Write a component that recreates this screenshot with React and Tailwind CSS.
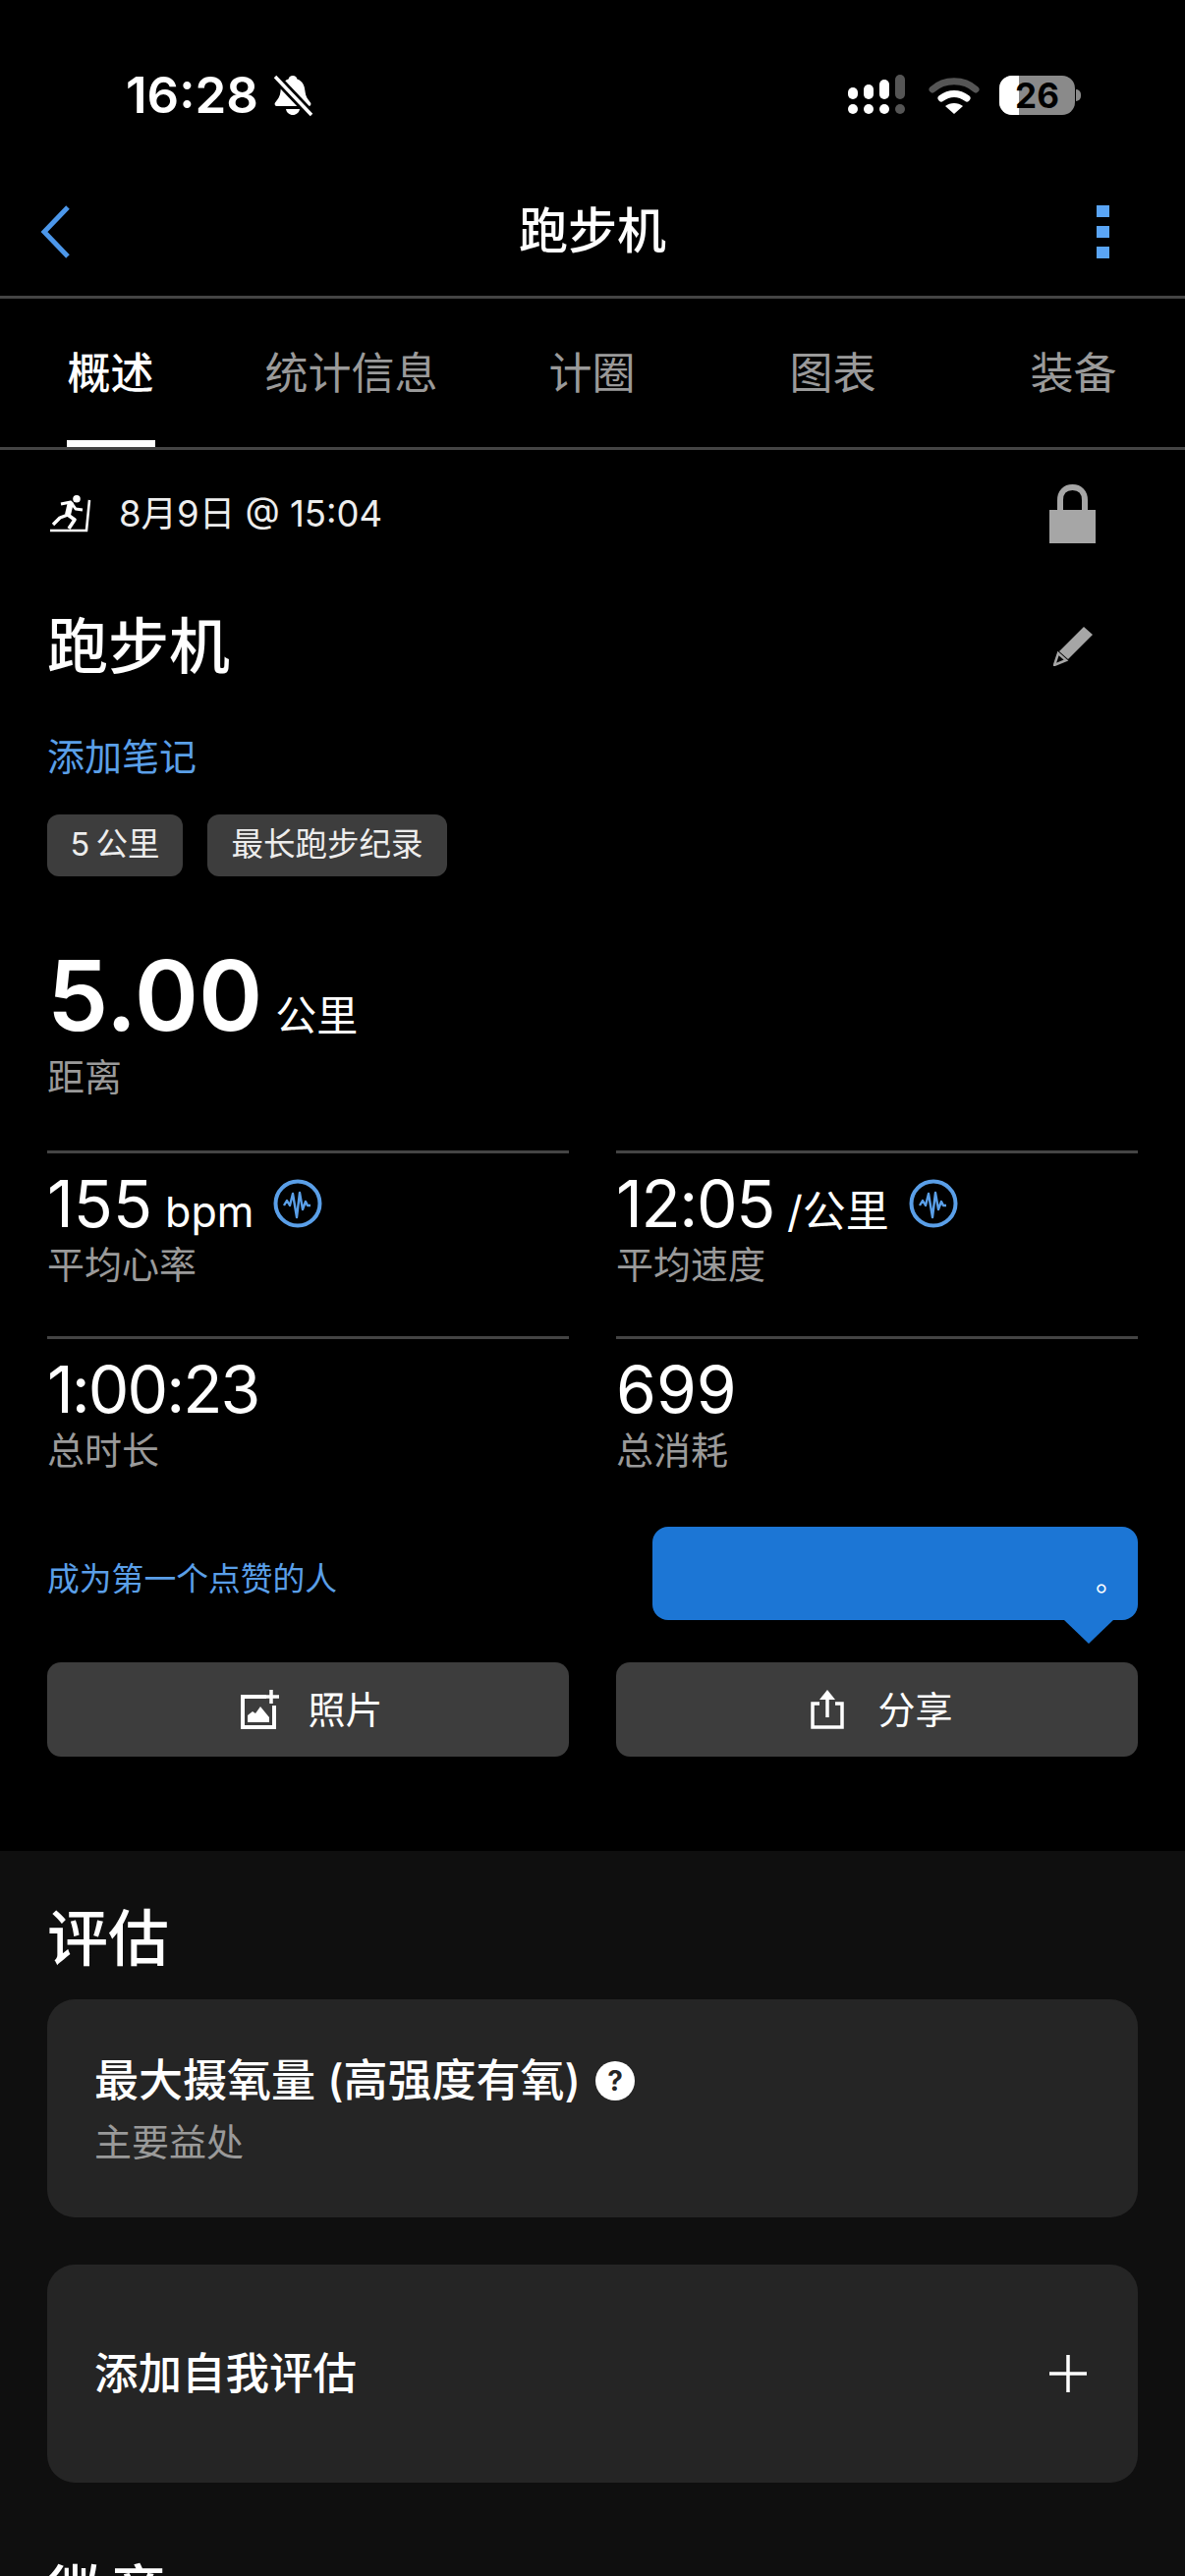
const BLUE = '#5a9fe8';

function BellOff() {
    return (
        <svg width="42" height="44" viewBox="0 0 42 44" fill="none">
            <path d="M21 2c2.500 0 4 1.600 4.400 3.400C31 7.200 33 12 33.500 18c.3 4.500 2.500 8 5.500 11.500 1 1.300.3 3.500-1.800 3.500H4.800C2.700 33 2 30.800 3 29.500 6 26 8.200 22.500 8.500 18 9 12 11 7.200 16.600 5.400 17 3.600 18.500 2 21 2z" fill="#fff" />
            <path d="M14 36h14c-.6 3.600-3.400 6-7 6s-6.400-2.400-7-6z" fill="#fff" />
            <path d="M3 3l37 39" stroke="#000" strokeWidth="9" />
            <path d="M3 3l37 39" stroke="#fff" strokeWidth="3.500" />
        </svg>
    );
}

function SignalIcon() {
    return (
        <svg width="62" height="42" viewBox="0 0 62 42">
            <rect x="0" y="13" width="10" height="12" rx="5" fill="#fff" />
            <rect x="16" y="10" width="10" height="15" rx="5" fill="#fff" />
            <rect x="32" y="5" width="10" height="20" rx="5" fill="#fff" />
            <rect x="48" y="0" width="10" height="25" rx="5" fill="#555" />
            <circle cx="5" cy="35" r="5" fill="#fff" />
            <circle cx="21" cy="35" r="5" fill="#fff" />
            <circle cx="37" cy="35" r="5" fill="#fff" />
            <circle cx="53" cy="35" r="5" fill="#555" />
        </svg>
    );
}

function WifiIcon() {
    return (
        <svg width="52" height="38" viewBox="0 0 52 38" fill="none">
            <path d="M4 13C16 2 36 2 48 13" stroke="#555" strokeWidth="7" strokeLinecap="round" />
            <path d="M13 22c8-6 18-6 26 0" stroke="#fff" strokeWidth="7" strokeLinecap="round" />
            <path d="M17 30c5-4 13-4 18 0l-9 8z" fill="#fff" />
        </svg>
    );
}

function Battery() {
    return (
        <div className="flex items-center">
            <div className="relative w-[77px] h-[40px] rounded-[13px] overflow-hidden bg-[#8a8a8a] flex items-center justify-center">
                <div className="absolute left-0 top-0 bottom-0 w-[20px] bg-white" />
                <span className="relative text-[35px] font-bold text-black leading-none">26</span>
            </div>
            <div className="w-[5px] h-[12px] bg-[#8a8a8a] rounded-r-full ml-[1px]" />
        </div>
    );
}

function TreadmillIcon() {
    return (
        <svg width="42" height="38" viewBox="0 0 42 38" fill="none">
            <circle cx="27" cy="3.800" r="3.800" fill="#fff" />
            <path d="M40 5l-3 31H0" stroke="#fff" strokeWidth="2.600" />
            <path d="M11 9l10-2 5 7 7 1" stroke="#fff" strokeWidth="3" strokeLinejoin="round" />
            <path d="M21 7l-3 13" stroke="#fff" strokeWidth="6" />
            <path d="M18 20l-8 3-7 7" stroke="#fff" strokeWidth="3.400" strokeLinejoin="round" />
            <path d="M18 20l7 5-6 9" stroke="#fff" strokeWidth="3.600" strokeLinejoin="round" />
        </svg>
    );
}

function LockIcon() {
    return (
        <svg width="47" height="60" viewBox="0 0 47 60" fill="none">
            <path d="M11 27V16C11 8 16 3 23.500 3S36 8 36 16v11" stroke="#a6a6a6" strokeWidth="6" />
            <rect x="0" y="26" width="47" height="34" fill="#a6a6a6" />
        </svg>
    );
}

function PencilIcon() {
    return (
        <svg width="40" height="40" viewBox="0 0 40 40" fill="none">
            <path d="M31 0l9 8L15 33 6 25z" fill="#a6a6a6" />
            <path d="M5 27l8 7-12 5z" fill="none" stroke="#a6a6a6" strokeWidth="2.500" />
        </svg>
    );
}

function PulseBadge() {
    return (
        <svg width="50" height="50" viewBox="0 0 50 50" fill="none" className="shrink-0">
            <circle cx="25" cy="25" r="22.500" stroke={BLUE} strokeWidth="4" />
            <path d="M11 27l3-5 3 5 3-12 4 24 3-25 3 17 3-8 2 4h3" stroke={BLUE} strokeWidth="2.400" strokeLinejoin="round" />
        </svg>
    );
}

function PhotoIcon() {
    return (
        <svg width="41" height="40" viewBox="0 0 41 40" fill="none">
            <path d="M26 7H2v31h32V16" stroke="#fff" strokeWidth="4" />
            <path d="M31 0v14M24 7h15" stroke="#fff" strokeWidth="3.500" />
            <path d="M7 33V26l5-4 3 2 5-7 9 11v5z" fill="#fff" />
        </svg>
    );
}

function ShareIcon() {
    return (
        <svg width="34" height="40" viewBox="0 0 34 40" fill="none">
            <path d="M9 14H2v24h30V14h-7" stroke="#fff" strokeWidth="3.500" />
            <path d="M17 4v24" stroke="#fff" strokeWidth="3.500" />
            <path d="M17 0l8 10H9z" fill="#fff" />
        </svg>
    );
}

function HelpIcon() {
    return (
        <div className="w-[40px] h-[40px] rounded-full bg-white flex items-center justify-center text-[#252525] text-[28px] font-bold leading-none shrink-0">
            ?
        </div>
    );
}

function Stat({ value, unit, label, pulse, tight }) {
    return (
        <div className="border-t-[3px] border-[#444444] h-[189px] pt-[17px]">
            <div className="flex items-baseline h-[68px]">
                <span className={`text-[66px] leading-[68px] font-normal ${tight}`}>{value}</span>
                {unit && <span className={unit === 'bpm' ? 'text-[43px] ml-[13px]' : 'text-[44px] ml-[13px]'}>{unit}</span>}
                {pulse && <span className="ml-[20px] self-center"><PulseBadge /></span>}
            </div>
            <div className="text-[38px] leading-[44px] text-[#9a9a9a] mt-[6px]">{label}</div>
        </div>
    );
}

function ActionButton({ icon, label, className }) {
    return (
        <button className={`h-[96px] rounded-[14px] bg-[#3d3d3d] flex items-center justify-center text-[38px] text-white ${className}`}>
            {icon}
            <span>{label}</span>
        </button>
    );
}

const tabs = ['概述', '统计信息', '计圈', '图表', '装备'];

export default function App() {
    return (
        <div
            className="w-[1206px] h-[2622px] overflow-hidden bg-black text-white"
            style={{ fontFamily: '"Inter", "Noto Sans CJK SC", sans-serif' }}
        >
            {/* status bar */}
            <div className="h-[170px] pt-[74px] pl-[128px] pr-[106px] flex items-start justify-between">
                <div className="flex items-center gap-[14px] h-[46px]">
                    <span className="text-[51px] leading-[46px] font-semibold">16:28</span>
                    <BellOff />
                </div>
                <div className="flex items-center gap-[20px] h-[46px]">
                    <SignalIcon />
                    <WifiIcon />
                    <Battery />
                </div>
            </div>

            {/* nav */}
            <div className="h-[134px] border-b-[3px] border-[#444444] pl-[40px] pr-[77px] flex items-center justify-between">
                <div className="w-[50px]">
                    <svg width="32" height="54" viewBox="0 0 32 54" fill="none">
                        <path d="M29 2L5 27l24 25" stroke="#4c97ea" strokeWidth="5" />
                    </svg>
                </div>
                <div className="text-[50px] font-medium">跑步机</div>
                <div className="flex flex-col gap-[9px]">
                    <div className="w-[13px] h-[12px] bg-[#5aa5f5]" />
                    <div className="w-[13px] h-[12px] bg-[#5aa5f5]" />
                    <div className="w-[13px] h-[12px] bg-[#5aa5f5]" />
                </div>
            </div>

            {/* tabs */}
            <div className="h-[154px] border-b-[3px] border-[#444444] overflow-hidden">
                <div className="grid grid-cols-[repeat(5,245px)] h-full -ml-[10px]">
                    {tabs.map((tab, i) => (
                        <div
                            key={tab}
                            className={`relative flex items-center justify-center text-[44px] ${i === 0 ? 'text-white font-medium' : 'text-[#9a9a9a]'}`}
                        >
                            {tab}
                            {i === 0 && <div className="absolute bottom-0 left-[78px] w-[90px] h-[7px] bg-white" />}
                        </div>
                    ))}
                </div>
            </div>

            <div className="px-[48px]">
                <div className="h-[130px] flex items-center justify-between">
                    <div className="flex items-center">
                        <div className="ml-[3px] w-[70px]"><TreadmillIcon /></div>
                        <span className="text-[36.5px] text-[#ededed]">8月9日 @ 15:04</span>
                    </div>
                    <div className="mr-[43px]"><LockIcon /></div>
                </div>

                <div className="h-[140px] flex items-center justify-between">
                    <div className="text-[62px] font-medium">跑步机</div>
                    <div className="mr-[46px]"><PencilIcon /></div>
                </div>

                <div className="h-[84px] flex items-center text-[38px]" style={{ color: BLUE }}>添加笔记</div>

                <div className="flex gap-[25px] mt-[17px]">
                    <div className="h-[63px] w-[138px] rounded-[12px] bg-[#3d3d3d] flex items-center justify-center text-[32.5px] text-[#ededed] [word-spacing:-3px]">5 公里</div>
                    <div className="h-[63px] w-[244px] rounded-[12px] bg-[#3d3d3d] flex items-center justify-center text-[32.5px] text-[#ededed]">最长跑步纪录</div>
                </div>

                <div className="flex items-baseline mt-[65px] h-[112px]">
                    <span className="text-[99px] leading-[112px] font-semibold">5.00</span>
                    <span className="text-[42px] ml-[13px]">公里</span>
                </div>
                <div className="text-[38px] leading-[44px] text-[#9a9a9a] mt-[5px]">距离</div>

                <div className="grid grid-cols-2 gap-x-[48px] mt-[53px]">
                    <Stat value="155" unit="bpm" label="平均心率" pulse tight="" />
                    <Stat value="12:05" unit="/公里" label="平均速度" pulse tight="tracking-[-1.4px]" />
                    <Stat value="1:00:23" label="总时长" tight="tracking-[-2px]" />
                    <Stat value="699" label="总消耗" tight="" />
                </div>

                <div className="relative h-[148px] pb-[20px] flex items-center text-[32.8px] -mt-[5px]" style={{ color: BLUE }}>
                    成为第一个点赞的人
                    <div className="absolute right-0 top-[10px] w-[494px] h-[95px] rounded-[16px] bg-[#1c76d5] flex items-end justify-end pr-[13px] pb-[26px] text-white text-[30px] leading-none">
                        。
                    </div>
                    <svg className="absolute right-[25px] top-[105px]" width="50" height="24" viewBox="0 0 50 24">
                        <path d="M0 0h50L25 24z" fill="#1c76d5" />
                    </svg>
                </div>

                <div className="grid grid-cols-2 gap-x-[48px]">
                    <ActionButton icon={<PhotoIcon />} label="照片" className="gap-[27px] pl-[8px]" />
                    <ActionButton icon={<ShareIcon />} label="分享" className="gap-[34px] pl-[10px]" />
                </div>
            </div>

            {/* summary section */}
            <div className="mt-[96px] bg-[#0f0f0f] px-[48px] pt-[48px] h-[800px]">
                <div className="text-[62px] leading-[84px] font-medium">评估</div>
                <div className="mt-[19px] h-[222px] rounded-[28px] bg-[#252525] pl-[48px] pr-[49px] flex flex-col justify-center">
                    <div className="flex items-center gap-[15px]">
                        <span className="text-[45px] leading-[60px] font-medium">最大摄氧量 (高强度有氧)</span>
                        <HelpIcon />
                    </div>
                    <div className="text-[38px] leading-[50px] text-[#9a9a9a] mt-[7px]">主要益处</div>
                </div>
                <div className="mt-[48px] h-[222px] rounded-[28px] bg-[#252525] pl-[48px] pr-[52px] flex items-center justify-between">
                    <span className="text-[44.5px] font-medium">添加自我评估</span>
                    <svg width="38" height="38" viewBox="0 0 38 38" fill="none">
                        <path d="M19 0v38M0 19h38" stroke="#fff" strokeWidth="3.500" />
                    </svg>
                </div>
                <div className="text-[62px] leading-[84px] font-medium mt-[72px]">徽章</div>
            </div>
        </div>
    );
}
